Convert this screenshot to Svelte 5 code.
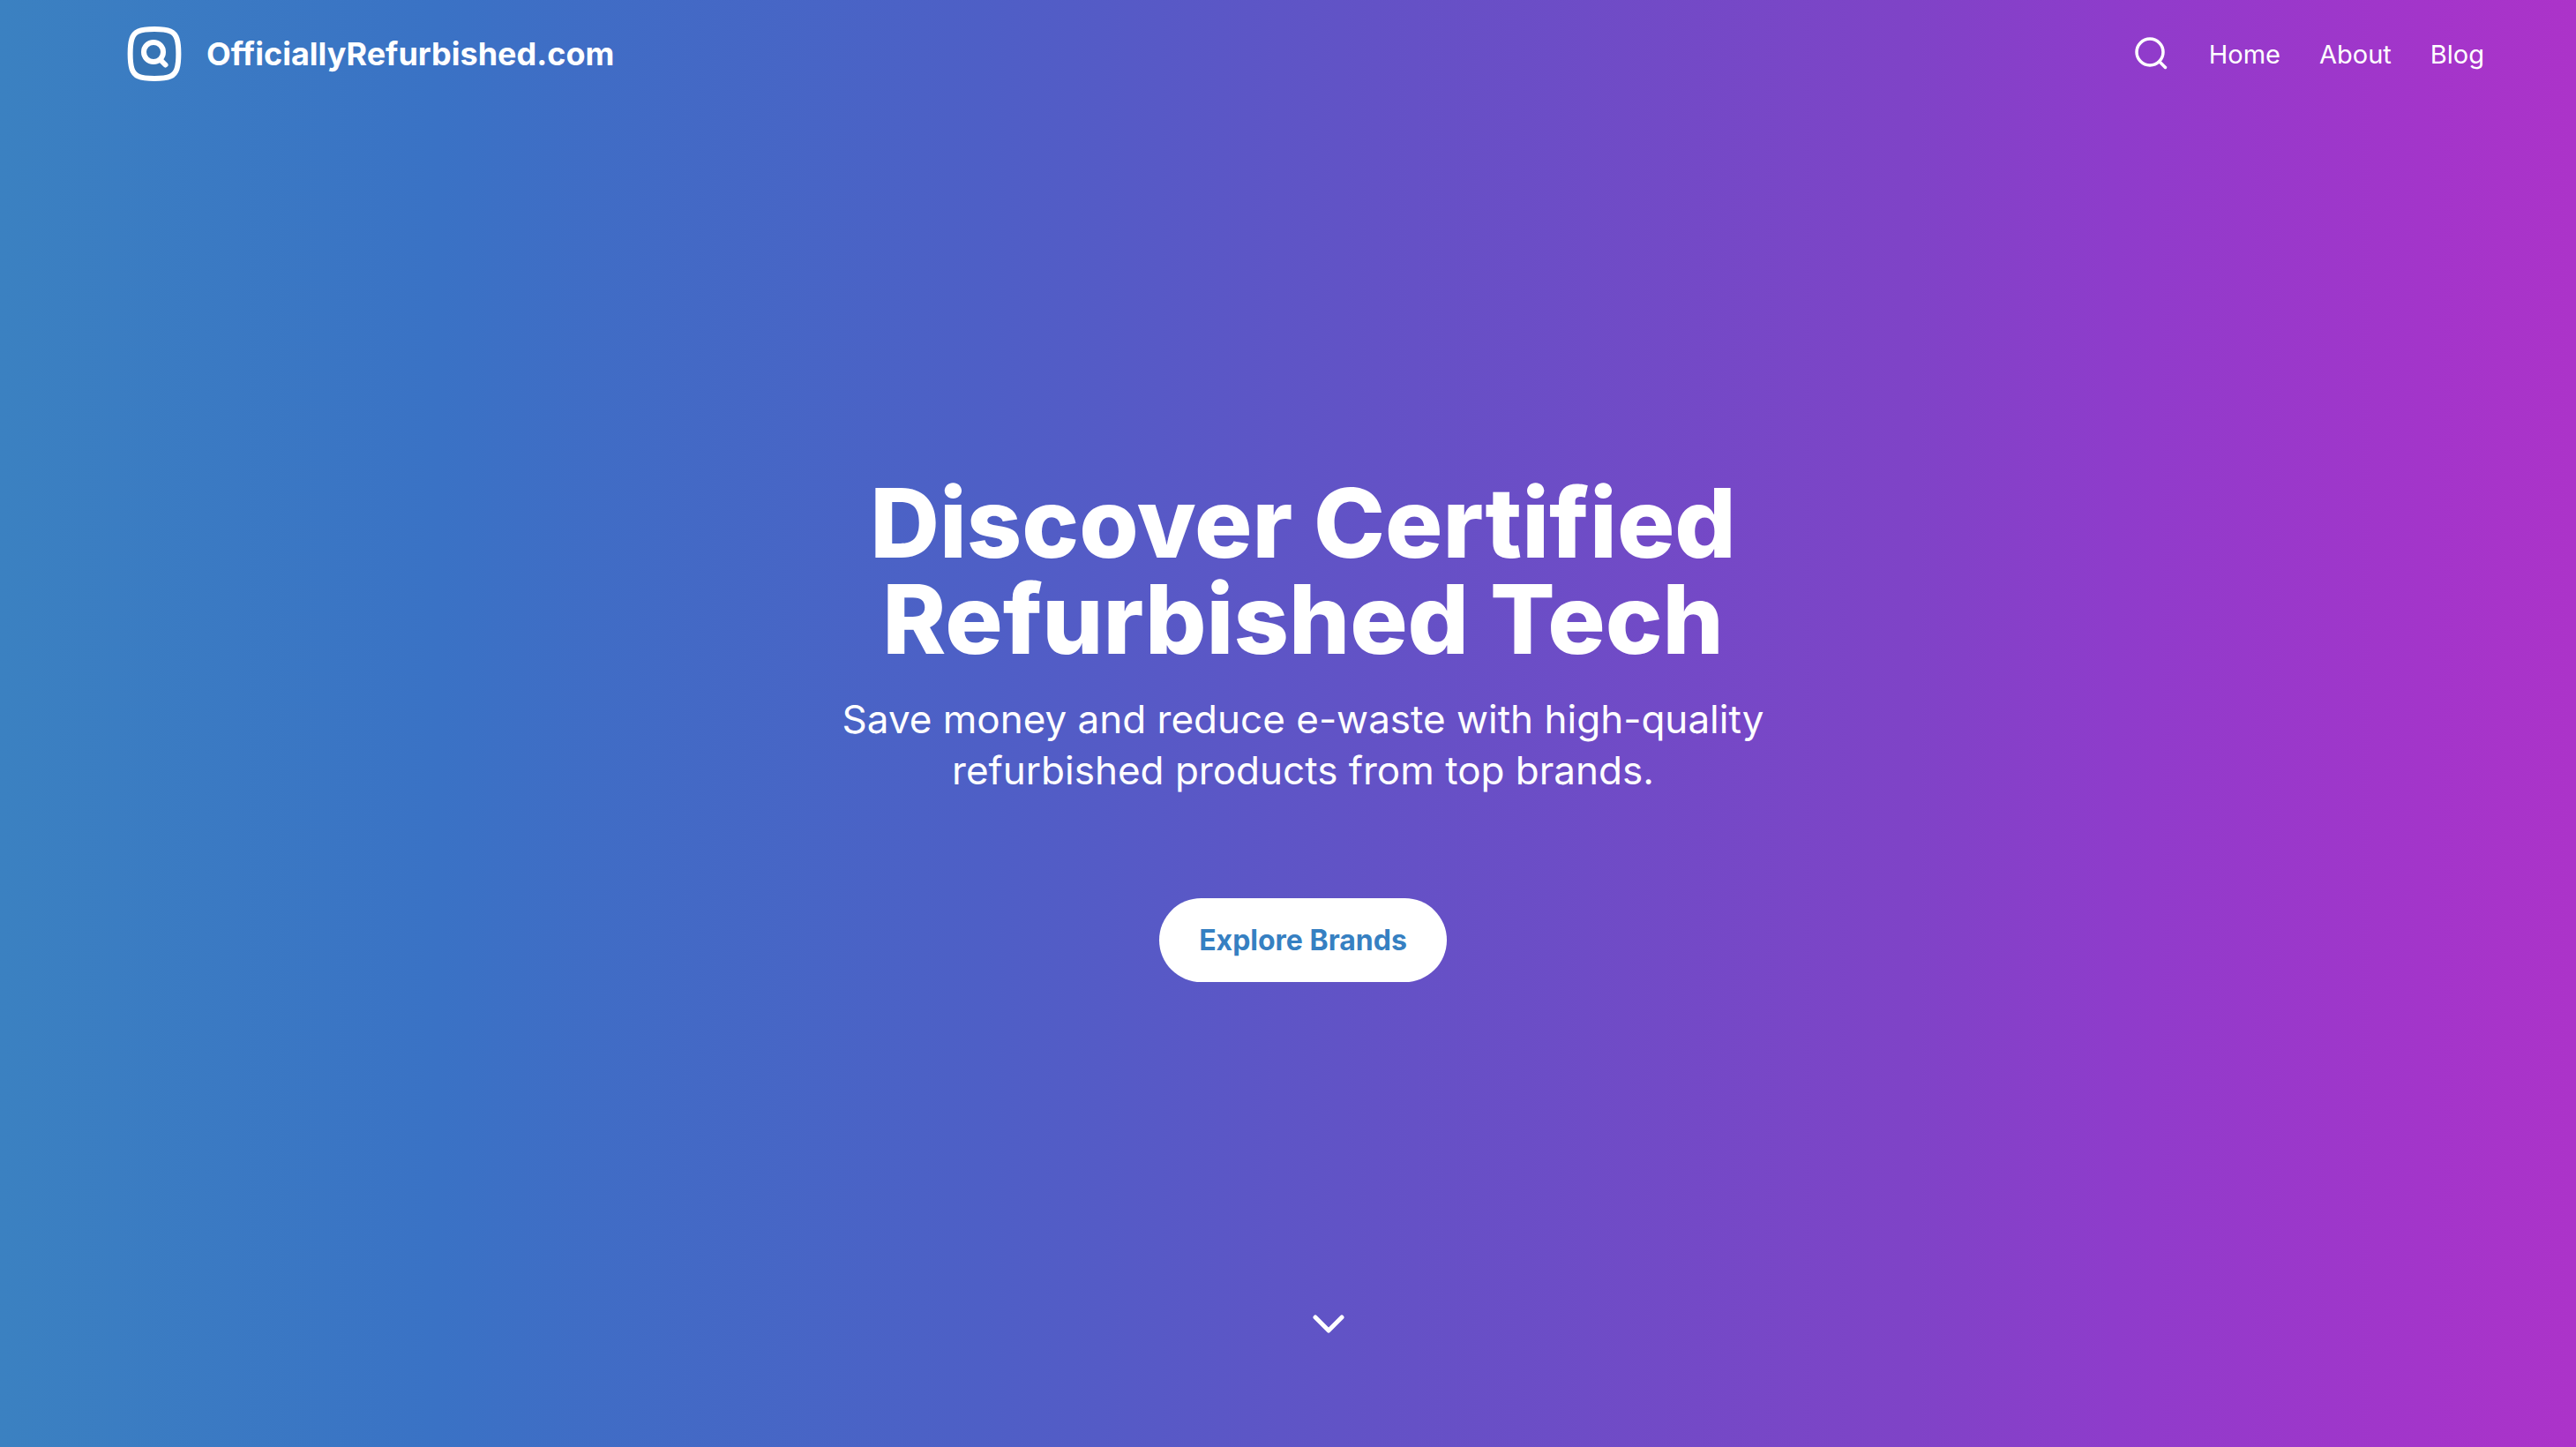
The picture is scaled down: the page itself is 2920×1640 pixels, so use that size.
<script>
  const links = ['Home', 'About', 'Blog'];
</script>

<div class="page">
  <header>
    <a class="brand" href="#home">
      <svg viewBox="0 0 62 62" aria-hidden="true">
        <path
          d="M31 3C48 3 54 6 56.500 14C59 22 59 40 56.500 48C54 56 48 59 31 59C14 59 8 56 5.500 48C3 40 3 22 5.500 14C8 6 14 3 31 3Z"
          fill="#3674b5" stroke="#fff" stroke-width="6" />
        <circle cx="30" cy="29" r="11" fill="none" stroke="#fff" stroke-width="6" />
        <path d="M38 38L43.500 43.500" stroke="#fff" stroke-width="6" stroke-linecap="round" />
      </svg>
      <span>OfficiallyRefurbished.com</span>
    </a>
    <nav>
      <button class="search" aria-label="Search">
        <svg viewBox="0 0 40 40" aria-hidden="true">
          <circle cx="17" cy="18" r="15" />
          <path d="M28 29L34.500 35.500" />
        </svg>
      </button>
      {#each links as link}
        <a href="#{link.toLowerCase()}">{link}</a>
      {/each}
    </nav>
  </header>

  <main>
    <h1>Discover Certified<br />Refurbished Tech</h1>
    <p>Save money and reduce e-waste with high-quality<br />refurbished products from top brands.</p>
    <a class="cta" href="#brands">Explore Brands</a>
  </main>

  <footer>
    <a href="#brands" aria-label="Scroll down">
      <svg viewBox="0 0 36 24" aria-hidden="true"><path d="M3 4L18 19L33 4" /></svg>
    </a>
  </footer>
</div>

<style>
  :global(body) {
    margin: 0;
  }
  .page {
    min-height: 100vh;
    display: flex;
    flex-direction: column;
    font-family: Inter, sans-serif;
    color: #fff;
    background: linear-gradient(to right, #3b81c1 0%, #3a72c5 17%, #4e5fc6 38%, #6153c6 52%, #7f43c7 74%, #8e3ccb 82%, #a335ca 94%, #ac33c9 100%);
  }
  a {
    color: inherit;
    text-decoration: none;
  }
  svg {
    display: block;
  }
  header {
    display: flex;
    align-items: center;
    justify-content: space-between;
    height: 122px;
    padding: 0 104px 0 144px;
  }
  .brand {
    display: flex;
    align-items: center;
    gap: 28px;
    font-size: 36px;
    font-weight: 700;
  }
  .brand svg {
    width: 62px;
    height: 62px;
  }
  nav {
    display: flex;
    align-items: center;
    gap: 44px;
    font-size: 29px;
    font-weight: 400;
  }
  .search {
    padding: 0;
    border: 0;
    background: none;
    color: inherit;
    cursor: pointer;
  }
  .search svg {
    width: 40px;
    height: 40px;
    fill: none;
    stroke: currentColor;
    stroke-width: 3.5;
    stroke-linecap: round;
  }
  main {
    flex: 1;
    display: flex;
    flex-direction: column;
    align-items: center;
    justify-content: center;
    padding: 40px 0 0 34px;
    text-align: center;
  }
  h1 {
    margin: 0 0 30px;
    font-size: 109px;
    line-height: 109px;
    font-weight: 800;
  }
  p {
    margin: 0 0 116px;
    font-size: 44px;
    line-height: 58px;
  }
  .cta {
    padding: 24px 45px;
    border-radius: 48px;
    background: #fff;
    color: #3680c2;
    font-size: 32px;
    line-height: 47px;
    font-weight: 700;
  }
  footer {
    display: flex;
    justify-content: center;
    padding: 0 0 127px 92px;
  }
  footer svg {
    width: 36px;
    height: 24px;
    fill: none;
    stroke: #fff;
    stroke-width: 5px;
    stroke-linecap: round;
    stroke-linejoin: round;
  }
</style>
